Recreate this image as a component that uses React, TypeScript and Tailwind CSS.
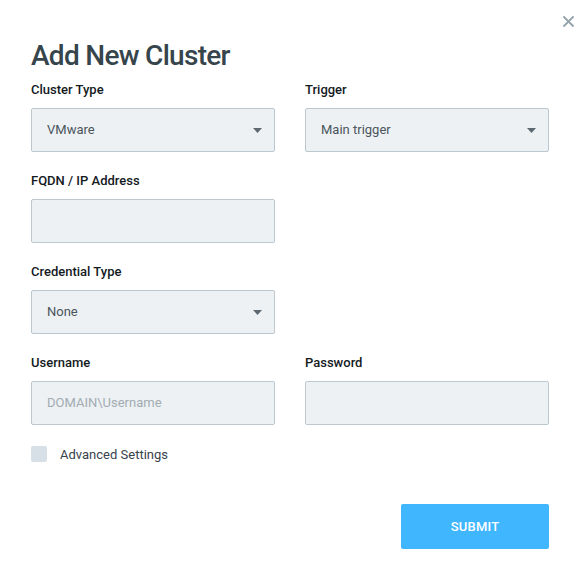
import React from "react";

function Caret() {
  return (
    <svg width="9" height="5" viewBox="0 0 9 5" className="shrink-0">
      <path d="M0 0h9L4.5 5z" fill="#5d6870" />
    </svg>
  );
}

function Field({ label, children }: { label: string; children: React.ReactNode }) {
  return (
    <div className="flex flex-col">
      <div className="h-[19px] text-[13px] leading-[19px] font-medium text-[#141a1e]">{label}</div>
      <div className="mt-[9px] h-[44px] rounded-[2px] border border-[#bcc8d0] bg-[#edf1f4] flex items-center justify-between pl-[15px] pr-[12px] text-[13px] text-[#4b555c]">
        {children}
      </div>
    </div>
  );
}

export default function App() {
  return (
    <div className="relative w-[585px] h-[570px] bg-white" style={{ fontFamily: "Roboto, 'Noto Sans', sans-serif" }}>
      <button className="absolute left-[562px] top-[15px] w-[12px] h-[12px] flex items-center justify-center">
        <svg width="11" height="11" viewBox="0 0 11 11">
          <path d="M1 1l9 9M10 1l-9 9" stroke="#95a3ab" strokeWidth="1.8" strokeLinecap="round" />
        </svg>
      </button>
      <div className="pl-[31px] pt-[39px] w-[549px]">
        <h1 className="text-[28px] leading-[34px] font-medium tracking-[-0.7px] text-[#36444c]">Add New Cluster</h1>
        <div className="mt-[7px] grid grid-cols-2 gap-x-[30px] gap-y-[19px]">
          <Field label="Cluster Type">
            <span>VMware</span>
            <Caret />
          </Field>
          <Field label="Trigger">
            <span>Main trigger</span>
            <Caret />
          </Field>
          <Field label="FQDN / IP Address">
            <span></span>
          </Field>
          <div />
          <Field label="Credential Type">
            <span>None</span>
            <Caret />
          </Field>
          <div />
          <Field label="Username">
            <span className="text-[#a2acb2]">DOMAIN\Username</span>
          </Field>
          <Field label="Password">
            <span></span>
          </Field>
        </div>
        <div className="mt-[20px] flex items-center gap-[13px]">
          <div className="w-[16px] h-[16px] rounded-[2px] bg-[#d6e0e6]" />
          <span className="pt-[2px] text-[13px] leading-[16px] text-[#37434b]">Advanced Settings</span>
        </div>
        <div className="mt-[41px] flex justify-end">
          <button className="w-[148px] h-[45px] rounded-[2px] bg-[#40b6ff] text-white text-[13px] font-medium tracking-[0.2px]">
            SUBMIT
          </button>
        </div>
      </div>
    </div>
  );
}
